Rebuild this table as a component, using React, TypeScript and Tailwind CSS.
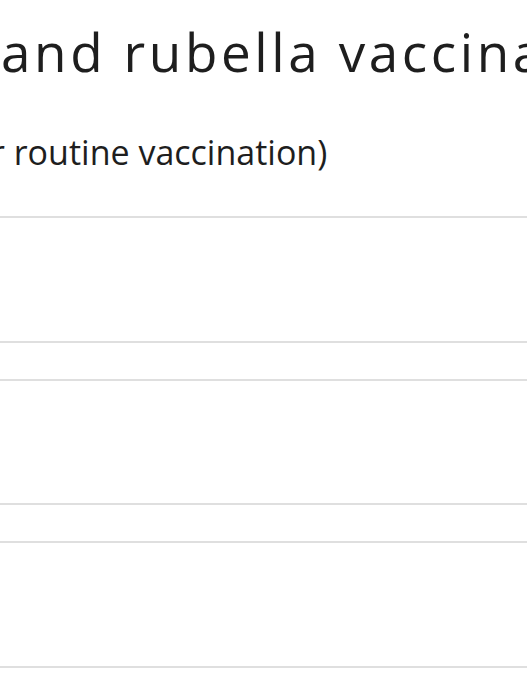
export default function App() {
  const rows = [0, 1, 2];
  return (
    <div className="w-full min-h-screen bg-white overflow-hidden text-[#1e1e1e]">
      <div className="whitespace-nowrap">
        <h1 className="pl-[1px] pt-[14px] text-[53px] leading-[76px] font-normal tracking-[3.6px] font-['Open_Sans','Lato',sans-serif]">
          and rubella vaccination
        </h1>
        <p className="-ml-[9px] mt-[42px] text-[34px] leading-[40px] font-['Open_Sans','Lato',sans-serif]">
          r routine vaccination)
        </p>
      </div>

      <div className="mt-[44px] flex flex-col gap-[36px]">
        {rows.map((r) => (
          <div key={r} className="h-[126.5px] border-y-2 border-[#dfdfdf]" />
        ))}
      </div>
    </div>
  );
}
